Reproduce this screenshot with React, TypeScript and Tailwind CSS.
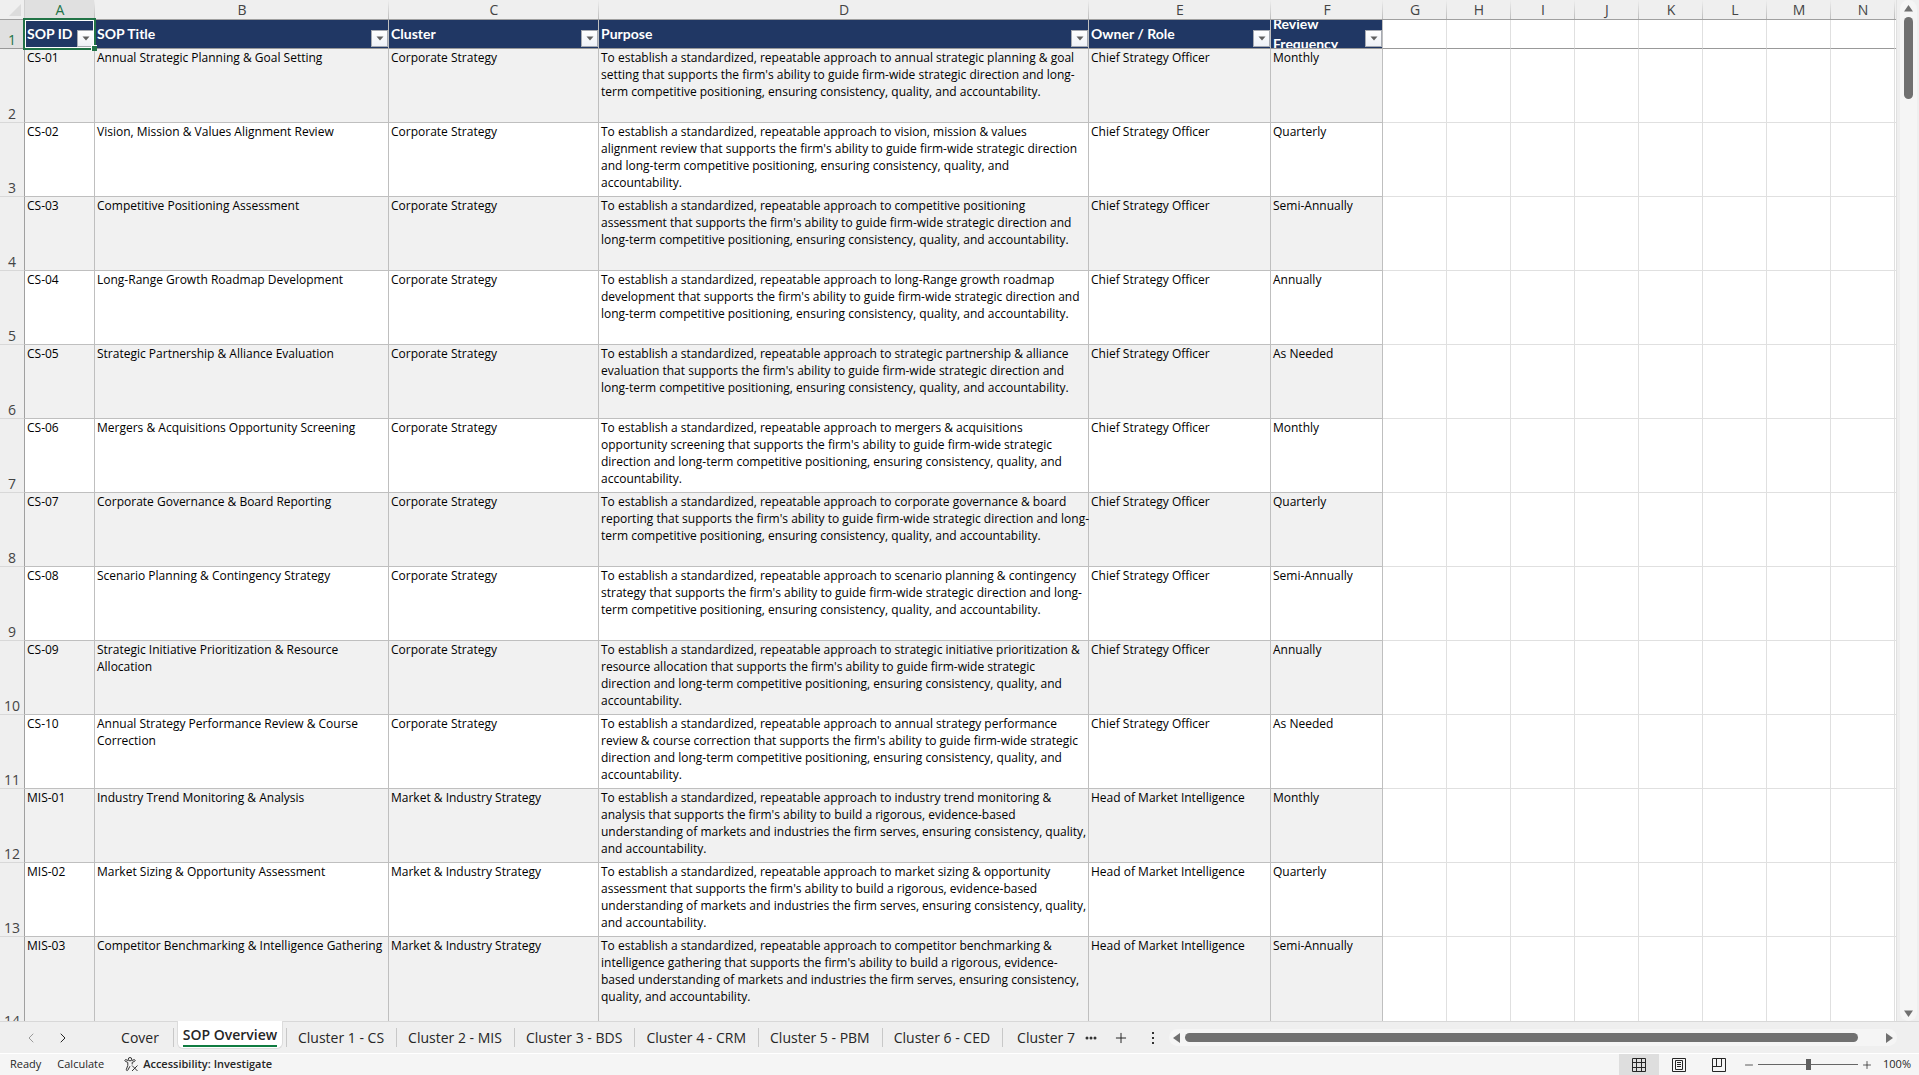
import { ChevronLeft, ChevronRight, Plus, Minus } from "lucide-react"

type Sop = {
  id: string
  title: string
  cluster: string
  purpose: string[]
  owner: string
  frequency: string
}

const CS = { cluster: "Corporate Strategy", owner: "Chief Strategy Officer" }
const MIS = { cluster: "Market & Industry Strategy", owner: "Head of Market Intelligence" }

const sops: Sop[] = [
  {
    ...CS,
    id: "CS-01",
    title: "Annual Strategic Planning & Goal Setting",
    purpose: [
      "To establish a standardized, repeatable approach to annual strategic planning & goal",
      "setting that supports the firm's ability to guide firm-wide strategic direction and long-",
      "term competitive positioning, ensuring consistency, quality, and accountability.",
    ],
    frequency: "Monthly",
  },
  {
    ...CS,
    id: "CS-02",
    title: "Vision, Mission & Values Alignment Review",
    purpose: [
      "To establish a standardized, repeatable approach to vision, mission & values",
      "alignment review that supports the firm's ability to guide firm-wide strategic direction",
      "and long-term competitive positioning, ensuring consistency, quality, and",
      "accountability.",
    ],
    frequency: "Quarterly",
  },
  {
    ...CS,
    id: "CS-03",
    title: "Competitive Positioning Assessment",
    purpose: [
      "To establish a standardized, repeatable approach to competitive positioning",
      "assessment that supports the firm's ability to guide firm-wide strategic direction and",
      "long-term competitive positioning, ensuring consistency, quality, and accountability.",
    ],
    frequency: "Semi-Annually",
  },
  {
    ...CS,
    id: "CS-04",
    title: "Long-Range Growth Roadmap Development",
    purpose: [
      "To establish a standardized, repeatable approach to long-Range growth roadmap",
      "development that supports the firm's ability to guide firm-wide strategic direction and",
      "long-term competitive positioning, ensuring consistency, quality, and accountability.",
    ],
    frequency: "Annually",
  },
  {
    ...CS,
    id: "CS-05",
    title: "Strategic Partnership & Alliance Evaluation",
    purpose: [
      "To establish a standardized, repeatable approach to strategic partnership & alliance",
      "evaluation that supports the firm's ability to guide firm-wide strategic direction and",
      "long-term competitive positioning, ensuring consistency, quality, and accountability.",
    ],
    frequency: "As Needed",
  },
  {
    ...CS,
    id: "CS-06",
    title: "Mergers & Acquisitions Opportunity Screening",
    purpose: [
      "To establish a standardized, repeatable approach to mergers & acquisitions",
      "opportunity screening that supports the firm's ability to guide firm-wide strategic",
      "direction and long-term competitive positioning, ensuring consistency, quality, and",
      "accountability.",
    ],
    frequency: "Monthly",
  },
  {
    ...CS,
    id: "CS-07",
    title: "Corporate Governance & Board Reporting",
    purpose: [
      "To establish a standardized, repeatable approach to corporate governance & board",
      "reporting that supports the firm's ability to guide firm-wide strategic direction and long-",
      "term competitive positioning, ensuring consistency, quality, and accountability.",
    ],
    frequency: "Quarterly",
  },
  {
    ...CS,
    id: "CS-08",
    title: "Scenario Planning & Contingency Strategy",
    purpose: [
      "To establish a standardized, repeatable approach to scenario planning & contingency",
      "strategy that supports the firm's ability to guide firm-wide strategic direction and long-",
      "term competitive positioning, ensuring consistency, quality, and accountability.",
    ],
    frequency: "Semi-Annually",
  },
  {
    ...CS,
    id: "CS-09",
    title: "Strategic Initiative Prioritization & Resource\nAllocation",
    purpose: [
      "To establish a standardized, repeatable approach to strategic initiative prioritization &",
      "resource allocation that supports the firm's ability to guide firm-wide strategic",
      "direction and long-term competitive positioning, ensuring consistency, quality, and",
      "accountability.",
    ],
    frequency: "Annually",
  },
  {
    ...CS,
    id: "CS-10",
    title: "Annual Strategy Performance Review & Course\nCorrection",
    purpose: [
      "To establish a standardized, repeatable approach to annual strategy performance",
      "review & course correction that supports the firm's ability to guide firm-wide strategic",
      "direction and long-term competitive positioning, ensuring consistency, quality, and",
      "accountability.",
    ],
    frequency: "As Needed",
  },
  {
    ...MIS,
    id: "MIS-01",
    title: "Industry Trend Monitoring & Analysis",
    purpose: [
      "To establish a standardized, repeatable approach to industry trend monitoring &",
      "analysis that supports the firm's ability to build a rigorous, evidence-based",
      "understanding of markets and industries the firm serves, ensuring consistency, quality,",
      "and accountability.",
    ],
    frequency: "Monthly",
  },
  {
    ...MIS,
    id: "MIS-02",
    title: "Market Sizing & Opportunity Assessment",
    purpose: [
      "To establish a standardized, repeatable approach to market sizing & opportunity",
      "assessment that supports the firm's ability to build a rigorous, evidence-based",
      "understanding of markets and industries the firm serves, ensuring consistency, quality,",
      "and accountability.",
    ],
    frequency: "Quarterly",
  },
  {
    ...MIS,
    id: "MIS-03",
    title: "Competitor Benchmarking & Intelligence Gathering",
    purpose: [
      "To establish a standardized, repeatable approach to competitor benchmarking &",
      "intelligence gathering that supports the firm's ability to build a rigorous, evidence-",
      "based understanding of markets and industries the firm serves, ensuring consistency,",
      "quality, and accountability.",
    ],
    frequency: "Semi-Annually",
  },
]

const columns = [
  { letter: "A", width: "w-[70px]", title: "SOP ID" },
  { letter: "B", width: "w-[294px]", title: "SOP Title" },
  { letter: "C", width: "w-[210px]", title: "Cluster" },
  { letter: "D", width: "w-[490px]", title: "Purpose" },
  { letter: "E", width: "w-[182px]", title: "Owner / Role" },
  { letter: "F", width: "w-[112px]", title: "Review\nFrequency" },
]

const emptyColumns = ["G", "H", "I", "J", "K", "L", "M", "N"]

const sheets = [
  "Cluster 1 - CS",
  "Cluster 2 - MIS",
  "Cluster 3 - BDS",
  "Cluster 4 - CRM",
  "Cluster 5 - PBM",
  "Cluster 6 - CED",
]

function FilterButton({ label }: { label: string }) {
  return (
    <button
      type="button"
      aria-label={`Filter ${label}`}
      className="absolute right-0 bottom-px flex h-[17px] w-[17px] items-center justify-center border border-[#a6aab2] bg-gradient-to-b from-white to-[#eef1f7]"
    >
      <svg width="8" height="5" viewBox="0 0 8 5">
        <path d="M0.5 0.5h7L4 4.5z" fill="#606060" />
      </svg>
    </button>
  )
}

// thin divider between column letters, fades out towards the top
function LetterCell({ letter, active }: { letter: string; active?: boolean }) {
  return (
    <th
      scope="col"
      className={`relative h-5 border-b p-0 text-center text-sm leading-[19px] font-normal ${
        active ? "border-[#217346] bg-[#e0e0e0] text-[#217346]" : "border-[#a0a0a0] text-[#444444]"
      }`}
    >
      {letter}
      <span className="absolute top-0 right-0 h-full w-px bg-gradient-to-b from-[#efefef] to-[#bdbdbd]" />
    </th>
  )
}

function Grid() {
  return (
    <div className="min-w-0 flex-1 overflow-hidden border-r border-[#e0e0e0] bg-white">
      <table className="w-full table-fixed border-separate border-spacing-0">
        <colgroup>
          <col className="w-[25px]" />
          {columns.map((c) => (
            <col key={c.letter} className={c.width} />
          ))}
          {emptyColumns.map((c) => (
            <col key={c} className="w-16" />
          ))}
          <col />
        </colgroup>
        <thead className="bg-[#efefef]">
          <tr>
            <td className="h-5 border-r border-b border-r-[#d0d0d0] border-b-[#a0a0a0] p-0">
              <svg width="24" height="19" viewBox="0 0 24 19" className="block">
                <path d="M21 4v12H9z" fill="#dcdcdc" />
              </svg>
            </td>
            {columns.map((c) => (
              <LetterCell key={c.letter} letter={c.letter} active={c.letter === "A"} />
            ))}
            {emptyColumns.map((c) => (
              <LetterCell key={c} letter={c} />
            ))}
            <td className="border-b border-[#a0a0a0] p-0" />
          </tr>
        </thead>
        <tbody className="text-xs leading-[17px] text-black">
          <tr>
            <th
              scope="row"
              className="h-[29px] border-r border-b border-r-[#a0a0a0] border-b-[#999999] bg-[#e0e0e0] p-0 text-center align-bottom text-sm leading-[17px] font-normal text-[#217346]"
            >
              1
            </th>
            {columns.map((c) => (
              <th
                key={c.letter}
                scope="col"
                className="relative h-[29px] border-r border-b border-r-[#bfbfbf] border-b-[#999999] bg-[#203764] p-0 text-left font-['Lato',sans-serif] text-sm leading-5 font-bold text-white"
              >
                <div className="flex h-7 items-center overflow-hidden pl-0.5 whitespace-pre">{c.title}</div>
                {c.letter === "A" && (
                  <>
                    <span className="pointer-events-none absolute -top-0.5 -right-0.5 -bottom-0.5 -left-0.5 z-10 border-2 border-[#217346]" />
                    <span className="pointer-events-none absolute inset-0 z-10 border border-white" />
                    <span className="pointer-events-none absolute -right-[3px] -bottom-[3px] z-20 h-1.5 w-1.5 border-t border-l border-white bg-[#217346]" />
                  </>
                )}
                <FilterButton label={c.title} />
              </th>
            ))}
            {emptyColumns.map((c) => (
              <td key={c} className="border-r border-b border-r-[#e0e0e0] border-b-[#999999]" />
            ))}
            <td className="border-b border-[#999999]" />
          </tr>
          {sops.map((sop, i) => (
            <tr key={sop.id}>
              <th
                scope="row"
                className={`border-r border-b border-r-[#a0a0a0] border-b-[#d8d8d8] bg-[#efefef] p-0 text-center align-bottom text-sm leading-[17px] font-normal text-[#444444] ${
                  i === sops.length - 1 ? "h-[93px]" : "h-[74px]"
                }`}
              >
                {i + 2}
              </th>
              {[sop.id, sop.title, sop.cluster, sop.purpose.join("\n"), sop.owner, sop.frequency].map((text, n) => (
                <td
                  key={n}
                  className={`border-r border-b border-[#bfbfbf] py-0 pr-0 pl-0.5 align-top whitespace-pre ${
                    i % 2 === 0 ? "bg-[#f1f1f1]" : "bg-white"
                  }`}
                >
                  {text}
                </td>
              ))}
              {emptyColumns.map((c) => (
                <td key={c} className="border-r border-b border-[#e0e0e0]" />
              ))}
              <td className="border-b border-[#e0e0e0]" />
            </tr>
          ))}
        </tbody>
      </table>
    </div>
  )
}

function VerticalScrollbar() {
  return (
    <div className="flex w-[22px] shrink-0 justify-center bg-[#efefef]">
      <div className="flex w-[17px] flex-col items-center rounded-full bg-[#f5f5f5] pt-[5px] pb-1">
        <svg width="9" height="7" viewBox="0 0 9 7">
          <path d="M4.5 0L9 6.5H0z" fill="#707070" />
        </svg>
        <div className="mt-[5px] h-[82px] w-[9px] rounded-full bg-[#707070]" />
        <svg width="9" height="7" viewBox="0 0 9 7" className="mt-auto">
          <path d="M4.5 7L9 0.5H0z" fill="#707070" />
        </svg>
      </div>
    </div>
  )
}

function SheetTabs() {
  return (
    <div className="flex h-8 shrink-0 border-t border-[#d8d8d8] bg-[#efefef] text-sm text-[#262626]">
      <div className="flex w-[107px] shrink-0 items-center gap-4 pl-[23px]">
        <button type="button" aria-label="Previous sheet">
          <ChevronLeft size={16} strokeWidth={1.5} color="#9a9a9a" />
        </button>
        <button type="button" aria-label="Next sheet">
          <ChevronRight size={16} strokeWidth={1.5} />
        </button>
      </div>
      <button type="button" className="w-[66px] shrink-0 text-center">
        Cover
      </button>
      <span className="my-1.5 w-px bg-[#c8c8c8]" />
      <button
        type="button"
        className="mx-[3px] -mt-px mb-1 flex w-[106px] shrink-0 items-start justify-center rounded-b-md border border-t-0 border-[#dcdcdc] bg-white font-semibold"
      >
        <span className="mt-0.5 h-6 border-b-2 border-[#107c41] leading-6 whitespace-nowrap">SOP Overview</span>
      </button>
      {sheets.map((name) => (
        <div key={name} className="flex shrink-0">
          <span className="my-1.5 w-px bg-[#c8c8c8]" />
          <button type="button" className="pr-3 pl-[11px] whitespace-nowrap">
            {name}
          </button>
        </div>
      ))}
      <span className="my-1.5 w-px bg-[#c8c8c8]" />
      <button type="button" className="pl-3.5 whitespace-nowrap">
        Cluster 7
      </button>
      <button type="button" aria-label="More sheets" className="pr-2 pl-2.5">
        <svg width="12" height="4" viewBox="0 0 12 4" fill="#333333">
          <circle cx="2" cy="2" r="1.5" />
          <circle cx="6" cy="2" r="1.5" />
          <circle cx="10" cy="2" r="1.5" />
        </svg>
      </button>
      <button type="button" aria-label="New sheet" className="px-2">
        <Plus size={16} strokeWidth={1.5} />
      </button>
      <div className="flex items-center px-3.5">
        <svg width="4" height="14" viewBox="0 0 4 14" fill="#333333">
          <path d="M1 1h2v2H1zM1 6h2v2H1zM1 11h2v2H1z" />
        </svg>
      </div>
      <div className="my-[7px] mr-[22px] flex min-w-0 flex-1 items-center rounded-full bg-[#f5f5f5] pr-1 pl-1">
        <svg width="7" height="10" viewBox="0 0 7 10">
          <path d="M7 0v10L0 5z" fill="#707070" />
        </svg>
        <div className="mr-7 ml-[5px] h-[9px] flex-1 rounded-full bg-[#707070]" />
        <svg width="7" height="10" viewBox="0 0 7 10">
          <path d="M0 0v10l7-5z" fill="#707070" />
        </svg>
      </div>
    </div>
  )
}

function StatusBar() {
  return (
    <div className="flex h-[22px] shrink-0 items-center border-t border-white bg-[#f5f5f5] text-[11px] text-[#262626]">
      <span className="ml-2.5">Ready</span>
      <span className="ml-4">Calculate</span>
      <button type="button" className="ml-5 flex items-center gap-1 font-semibold">
        <svg width="15" height="15" viewBox="0 0 15 15" fill="none" stroke="#333333">
          <circle cx="6" cy="2.2" r="1.7" />
          <path d="M4.3 3.6L2 2.7c-1-.3-1.7 1-.7 1.6l2.5 1.1v3L2.3 12.5c-.3 1 1 1.6 1.5.7L6 9.2M7.7 3.6L10 2.7c1-.3 1.7 1 .7 1.6L8.2 5.4v2M8 8.500l5.500 5.500M13.500 8.500L8 14" />
        </svg>
        Accessibility: Investigate
      </button>
      <div className="ml-auto flex h-full items-center pr-2">
        <button type="button" aria-label="Normal view" className="flex h-full w-10 items-center justify-center bg-[#dedede]">
          <svg width="14" height="14" viewBox="0 0 14 14" fill="none" stroke="#262626">
            <path d="M0.5 0.5h13v13h-13zM4.5 0v14M9.5 0v14M0 4.5h14M0 9.5h14" />
          </svg>
        </button>
        <button type="button" aria-label="Page layout" className="flex h-full w-10 items-center justify-center">
          <svg width="14" height="14" viewBox="0 0 14 14" fill="none" stroke="#262626">
            <path d="M0.5 0.5h13v13h-13zM3.5 2.5h7v9h-7zM5 4.5h4M5 6.5h4M5 8.5h4" />
          </svg>
        </button>
        <button type="button" aria-label="Page break preview" className="flex h-full w-10 items-center justify-center">
          <svg width="14" height="14" viewBox="0 0 14 14" fill="none" stroke="#262626">
            <path d="M0.5 0.5h13v13h-13zM4.5 0.5v8M0.5 8.5h9M9.5 0.5v8" />
          </svg>
        </button>
        <button type="button" aria-label="Zoom out" className="ml-1">
          <Minus size={12} strokeWidth={1.5} />
        </button>
        <input
          type="range"
          aria-label="Zoom"
          min={0}
          max={100}
          defaultValue={50}
          className="mx-[3px] h-3 w-[100px] appearance-none bg-[linear-gradient(#666,#666)] bg-[length:100%_1px] bg-center bg-no-repeat [&::-webkit-slider-thumb]:h-[11px] [&::-webkit-slider-thumb]:w-[5px] [&::-webkit-slider-thumb]:appearance-none [&::-webkit-slider-thumb]:bg-[#5f5f5f]"
        />
        <button type="button" aria-label="Zoom in">
          <Plus size={12} strokeWidth={1.5} />
        </button>
        <span className="ml-2.5">100%</span>
      </div>
    </div>
  )
}

export default function App() {
  return (
    <div className="flex h-screen flex-col overflow-hidden bg-[#efefef] font-['Open_Sans',sans-serif]">
      <div className="flex min-h-0 flex-1">
        <Grid />
        <VerticalScrollbar />
      </div>
      <SheetTabs />
      <StatusBar />
    </div>
  )
}
